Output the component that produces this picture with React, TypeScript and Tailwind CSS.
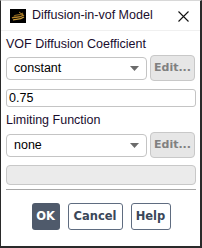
function Caret() {
  return (
    <svg width="9" height="5" viewBox="0 0 9 5" className="shrink-0">
      <path d="M0 0 H9 L4.5 5 Z" fill="#6b6b6b" />
    </svg>
  );
}

function Select({ value }: { value: string }) {
  return (
    <div className="flex h-[23px] w-[141px] items-center justify-between rounded-[4px] border border-[#c4c4c4] bg-white pl-[7px] pr-[7px] text-[12.5px] text-black">
      <span>{value}</span>
      <Caret />
    </div>
  );
}

function EditButton() {
  return (
    <div
      className="flex h-[26px] w-[45px] items-center justify-center rounded-[4px] border border-[#c8c8c8] bg-[#e6e6e6] text-[11px] font-bold text-[#808080]"
      style={{ fontFamily: '"DejaVu Sans", Verdana, sans-serif' }}
    >
      Edit...
    </div>
  );
}

export default function App() {
  return (
    <div
      className="flex h-[248px] w-[202px] flex-col border-t border-l border-t-[#d8d8d8] border-l-[#2a2a2a] border-r-2 border-b-2 border-r-[#2a2a2a] border-b-[#2a2a2a] bg-white"
      style={{ fontFamily: '"Liberation Sans", Arial, sans-serif' }}
    >
      {/* title bar */}
      <div className="flex h-[30px] shrink-0 items-center pl-[9px] pr-[10px] border-b border-[#f0f0f0]">
        <svg width="16" height="14" viewBox="0 0 16 14" className="shrink-0">
          <rect width="16" height="14" fill="#000" />
          <path d="M2 9 C5 7 8 10 14 6" stroke="#b8862b" strokeWidth="1.4" fill="none" />
          <path d="M4 7 C7 5 10 7 13 4" stroke="#8a6420" strokeWidth="1.2" fill="none" />
          <path d="M3 11 C6 10 10 11 14 8" stroke="#c99a3a" strokeWidth="1.2" fill="none" />
          <path d="M9 3 L13 6" stroke="#b8862b" strokeWidth="1" />
        </svg>
        <span className="ml-[6px] text-[12.5px] text-[#1a0d2e]">Diffusion-in-vof Model</span>
        <svg width="11" height="11" viewBox="0 0 11 11" className="ml-auto mr-[1px] mt-[2px]">
          <path d="M0.5 0.5 L10.5 10.5 M10.5 0.5 L0.5 10.5" stroke="#111" strokeWidth="1.1" />
        </svg>
      </div>

      {/* body */}
      <div className="flex flex-1 flex-col pl-[5px] pr-[4px]">
        <div className="mt-[6px] text-[12.5px] leading-[14px] text-[#1a0d2e]">VOF Diffusion Coefficient</div>
        <div className="mt-[4px] flex items-center gap-[3px]">
          <Select value="constant" />
          <EditButton />
        </div>
        <div className="mt-[8px] flex h-[18px] items-center rounded-[3px] border border-[#c4c4c4] pl-[2px] text-[12.5px] text-black">
          0.75
        </div>
        <div className="mt-[6px] text-[12.5px] leading-[14px] text-[#1a0d2e]">Limiting Function</div>
        <div className="mt-[5px] flex items-center gap-[3px]">
          <Select value="none" />
          <EditButton />
        </div>
        <div className="mt-[7px] h-[20px] rounded-[4px] border border-[#c8c8c8] bg-[#ebebeb]" />
        <div className="mt-[4px] h-px bg-[#a8a8a8]" />

        <div
          className="mt-[13px] flex justify-center gap-[8px] text-[11.5px] font-bold"
          style={{ fontFamily: '"DejaVu Sans", Verdana, sans-serif' }}
        >
          <div className="flex h-[27px] w-[28px] items-center justify-center rounded-[3px] bg-[#4f5a6b] text-white">OK</div>
          <div className="flex h-[27px] w-[55px] items-center justify-center rounded-[3px] border border-[#5f6c80] text-[#3b4759]">Cancel</div>
          <div className="flex h-[27px] w-[40px] items-center justify-center rounded-[3px] border border-[#5f6c80] text-[#3b4759]">Help</div>
        </div>
      </div>
    </div>
  );
}
